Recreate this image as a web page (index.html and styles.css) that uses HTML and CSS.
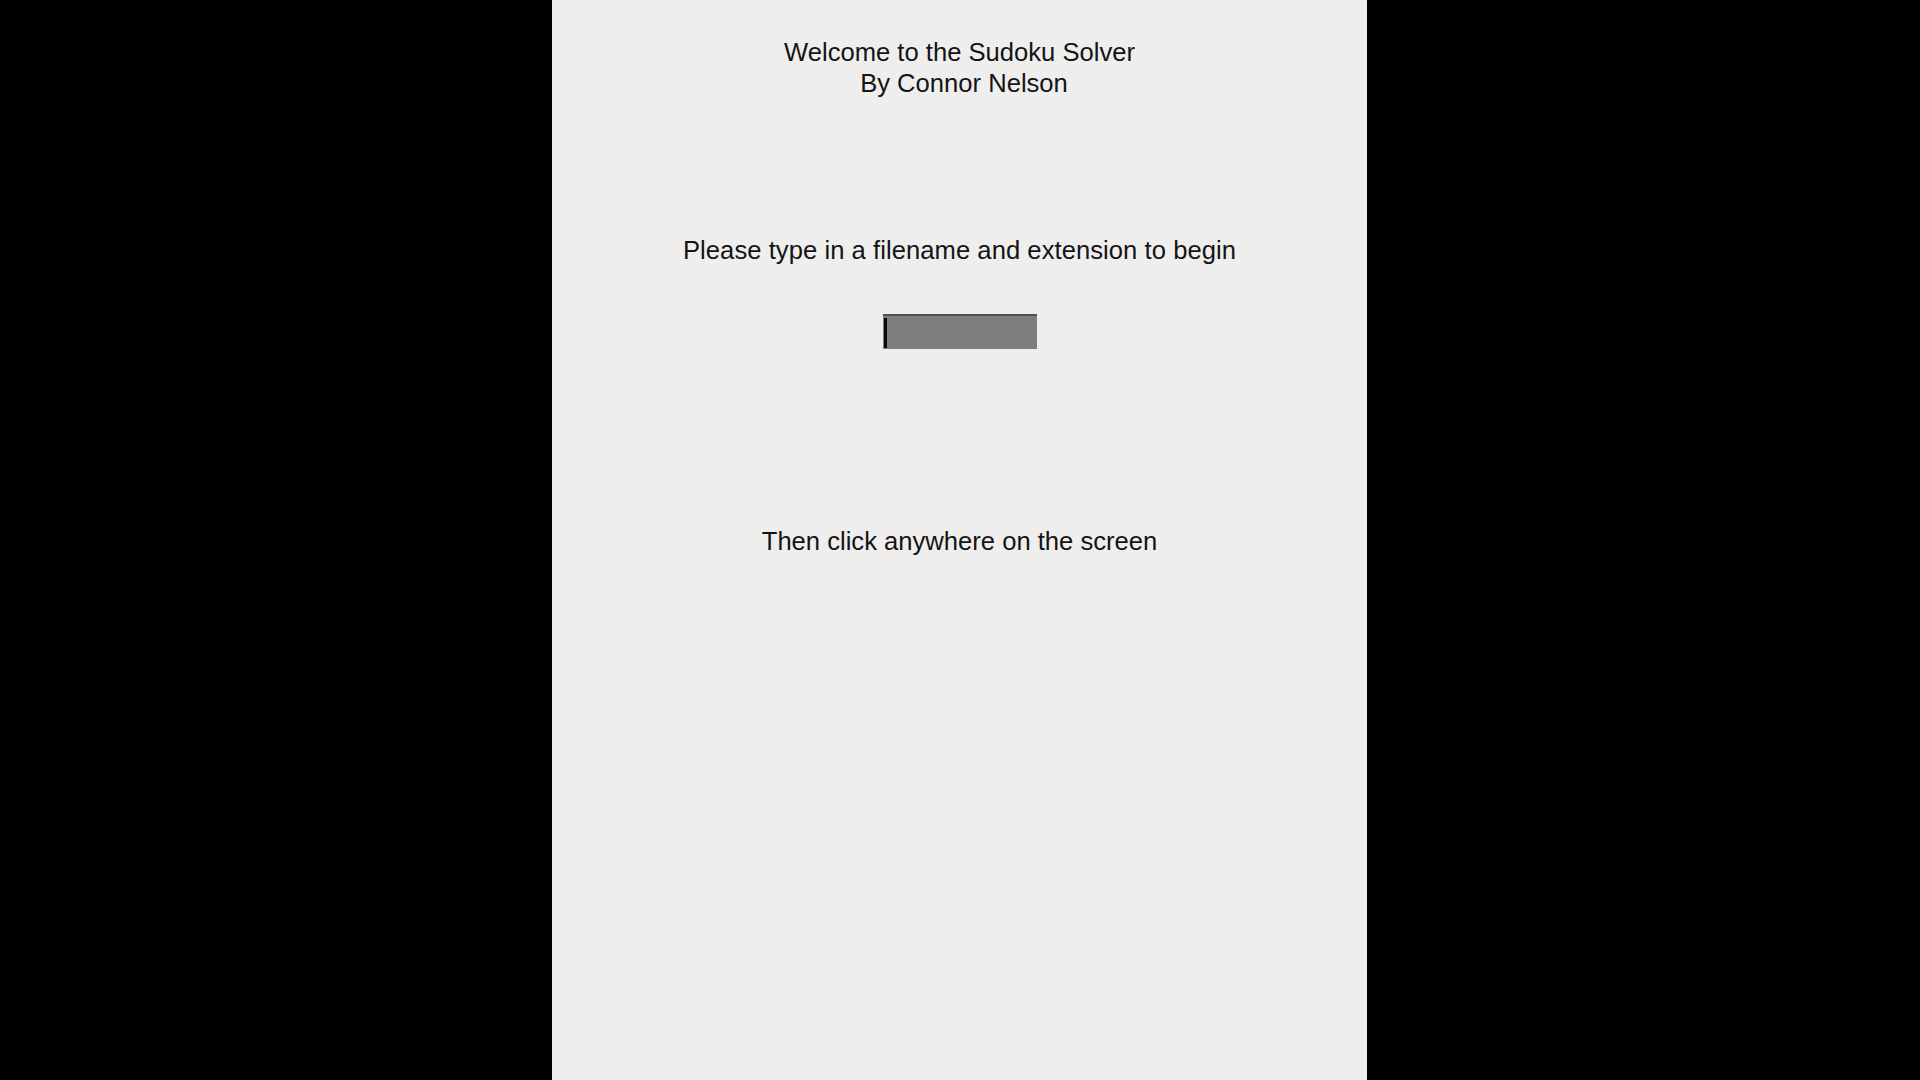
FILE: index.html
```html
<!DOCTYPE html>
<html lang="en">
<head>
<meta charset="utf-8">
<title>Sudoku Solver</title>
<link rel="stylesheet" href="styles.css">
</head>
<body>
  <main class="panel">
    <header class="title">
      <div class="title-line">Welcome to the Sudoku Solver</div>
      <div class="title-line byline">By Connor Nelson</div>
    </header>
    <p class="prompt">Please type in a filename and extension to begin</p>
    <div class="filebox"><span class="caret"></span></div>
    <p class="hint">Then click anywhere on the screen</p>
  </main>
</body>
</html>
```
FILE: styles.css
```css
html, body {
  margin: 0;
  padding: 0;
  height: 100%;
}

body {
  background: #000;
  display: flex;
  justify-content: center;
  font-family: "Liberation Sans", Arial, sans-serif;
  color: #141414;
}

.panel {
  width: 815px;
  height: 1080px;
  margin-left: -1px;
  background-color: #efefef;
  background-image: repeating-conic-gradient(#f3f1e6 0 25%, #ebebf5 0 50%);
  background-size: 2px 2px;
  display: flex;
  flex-direction: column;
  align-items: center;
  box-sizing: border-box;
  padding-top: 37px;
}

.title {
  display: flex;
  flex-direction: column;
  align-items: center;
  font-size: 25.6px;
  line-height: 31px;
}

.byline {
  padding-left: 9px;
}

.prompt,
.hint {
  margin: 0;
  font-size: 25.6px;
  line-height: 31px;
}

.prompt {
  margin-top: 136px;
  letter-spacing: 0.05px;
}

.filebox {
  margin-top: 48px;
  width: 154px;
  height: 35px;
  box-sizing: border-box;
  background: #7e7e80;
  border-top: 2px solid #505052;
  padding: 2px 0 1px 1px;
  display: flex;
  align-items: stretch;
}

.caret {
  width: 3px;
  background: #0a0a0a;
}

.hint {
  margin-top: 177px;
}
```
